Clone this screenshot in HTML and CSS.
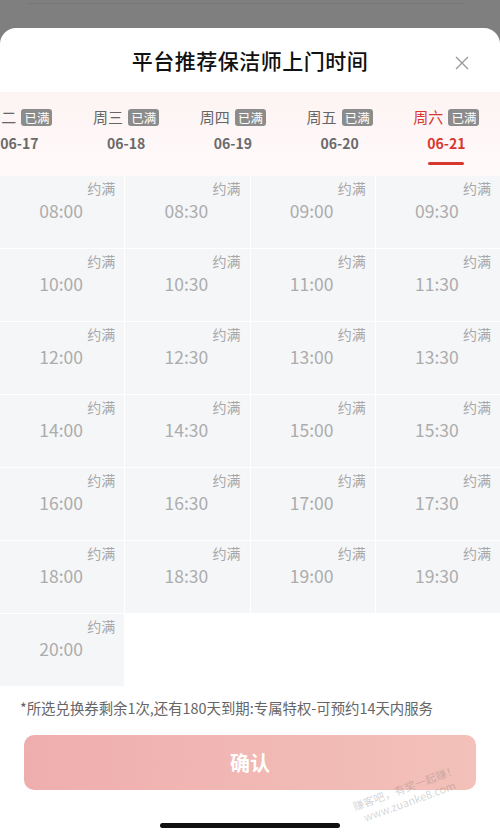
FILE: index.html
```html
<!DOCTYPE html>
<html lang="zh-CN">
<head>
    <meta charset="UTF-8">
    <meta name="viewport" content="width=device-width, initial-scale=1.0">
    <title>平台推荐保洁师上门时间</title>
    <link rel="stylesheet" href="styles.css">
</head>
<body>
    <div class="backdrop"><div class="backdrop-line"></div></div>

    <div class="sheet">
        <header class="sheet-head">
            <span></span>
            <h1>平台推荐保洁师上门时间</h1>
            <button class="close" type="button" aria-label="关闭">
                <svg width="16" height="16" viewBox="0 0 16 16">
                    <path d="M2 2 L14 14 M14 2 L2 14" stroke="#9a9a9a" stroke-width="1.4" fill="none"/>
                </svg>
            </button>
        </header>

        <div class="tabs">
            <div class="tab-track">
                <div class="tab"><div class="day">周二 <span class="badge">已满</span></div><div class="date">06-17</div></div>
                <div class="tab"><div class="day">周三 <span class="badge">已满</span></div><div class="date">06-18</div></div>
                <div class="tab"><div class="day">周四 <span class="badge">已满</span></div><div class="date">06-19</div></div>
                <div class="tab"><div class="day">周五 <span class="badge">已满</span></div><div class="date">06-20</div></div>
                <div class="tab active"><div class="day">周六 <span class="badge">已满</span></div><div class="date">06-21</div><div class="bar"></div></div>
            </div>
        </div>

        <div class="slots">
            <div class="slot"><span class="tag">约满</span><span class="time">08:00</span></div>
            <div class="slot"><span class="tag">约满</span><span class="time">08:30</span></div>
            <div class="slot"><span class="tag">约满</span><span class="time">09:00</span></div>
            <div class="slot"><span class="tag">约满</span><span class="time">09:30</span></div>
            <div class="slot"><span class="tag">约满</span><span class="time">10:00</span></div>
            <div class="slot"><span class="tag">约满</span><span class="time">10:30</span></div>
            <div class="slot"><span class="tag">约满</span><span class="time">11:00</span></div>
            <div class="slot"><span class="tag">约满</span><span class="time">11:30</span></div>
            <div class="slot"><span class="tag">约满</span><span class="time">12:00</span></div>
            <div class="slot"><span class="tag">约满</span><span class="time">12:30</span></div>
            <div class="slot"><span class="tag">约满</span><span class="time">13:00</span></div>
            <div class="slot"><span class="tag">约满</span><span class="time">13:30</span></div>
            <div class="slot"><span class="tag">约满</span><span class="time">14:00</span></div>
            <div class="slot"><span class="tag">约满</span><span class="time">14:30</span></div>
            <div class="slot"><span class="tag">约满</span><span class="time">15:00</span></div>
            <div class="slot"><span class="tag">约满</span><span class="time">15:30</span></div>
            <div class="slot"><span class="tag">约满</span><span class="time">16:00</span></div>
            <div class="slot"><span class="tag">约满</span><span class="time">16:30</span></div>
            <div class="slot"><span class="tag">约满</span><span class="time">17:00</span></div>
            <div class="slot"><span class="tag">约满</span><span class="time">17:30</span></div>
            <div class="slot"><span class="tag">约满</span><span class="time">18:00</span></div>
            <div class="slot"><span class="tag">约满</span><span class="time">18:30</span></div>
            <div class="slot"><span class="tag">约满</span><span class="time">19:00</span></div>
            <div class="slot"><span class="tag">约满</span><span class="time">19:30</span></div>
            <div class="slot"><span class="tag">约满</span><span class="time">20:00</span></div>
        </div>

        <p class="note">*所选兑换券剩余1次,还有180天到期:专属特权-可预约14天内服务</p>

        <button class="confirm" type="button">确认</button>

        <div class="home-bar"></div>

        <div class="watermark">
            <div>赚客吧，有奖一起赚！</div>
            <div>www.zuanke8.com</div>
        </div>
    </div>
</body>
</html>
```

FILE: styles.css
```css
html, body { margin: 0; padding: 0; }
body {
    width: 500px; height: 839px; overflow: hidden;
    background: #7f7f7f;
    font-family: "Noto Sans CJK SC", "Noto Sans", sans-serif;
}

.backdrop { height: 28px; padding-top: 3px; box-sizing: border-box; }
.backdrop-line { margin: 0 35px 0 28px; height: 1px; background: #767676; }

.sheet {
    position: relative;
    height: 811px;
    background: #fff;
    border-radius: 16px 16px 0 0;
    overflow: hidden;
}

.sheet-head {
    height: 64px;
    display: grid;
    grid-template-columns: 1fr auto 1fr;
    align-items: center;
}
.sheet-head h1 { margin: 0; font-size: 21px; font-weight: 500; color: #111; letter-spacing: 0.5px; }
.close {
    justify-self: end; margin-right: 30px; margin-top: 6px;
    width: 16px; height: 16px; padding: 0; border: none; background: none; display: flex;
}

.tabs {
    height: 84px;
    background: linear-gradient(#fdf3f3, #fffafa);
    overflow: hidden;
}
.tab-track { display: flex; margin-left: -34px; }
.tab {
    flex: 0 0 106.75px;
    display: flex; flex-direction: column; align-items: center;
    padding-top: 16px;
}
.day { display: flex; align-items: center; gap: 5px; font-size: 15px; line-height: 18px; color: #666; }
.badge {
    font-size: 12.5px; line-height: 17px; padding: 0 3px;
    color: #fff; background: #8c8c8c; border-radius: 3px;
}
.date { margin-top: 7px; font-size: 14px; line-height: 20px; font-weight: 700; color: #6a6a6a; }
.tab.active .day, .tab.active .date { color: #d8372f; }
.bar { margin-top: 9px; width: 36px; height: 3px; border-radius: 2px; background: #d8372f; }

.slots {
    display: grid;
    grid-template-columns: repeat(4, 1fr);
    grid-auto-rows: 72px;
    gap: 1px;
    background: #fff;
}
.slot {
    background: #f5f6f8;
    display: flex; flex-direction: column; align-items: center;
    padding: 4px 9px 0 7px;
}
.tag { align-self: flex-end; font-size: 14px; line-height: 16px; color: #a8a8a8; }
.time { margin-top: 4px; font-size: 17.5px; line-height: 22px; color: #acacac; }

.note { margin: 12px 0 0 20px; font-size: 14.4px; line-height: 20px; color: #666; white-space: nowrap; }

.confirm {
    display: block; width: 452px; height: 55px; margin: 17px 24px 0;
    border: none; border-radius: 10px;
    background: linear-gradient(90deg, #efaeae, #f3c1b9);
    color: #fff; font-size: 20px; font-weight: 700;
    font-family: "Noto Sans CJK SC", sans-serif;
}

.home-bar { width: 180px; height: 5px; margin: 33px auto 0; border-radius: 3px; background: #111; }

.watermark {
    position: absolute; left: 352px; top: 752px;
    transform: rotate(-20deg);
    font-size: 11px; line-height: 14px; color: rgba(110, 110, 110, 0.3);
    text-align: center;
}
```
